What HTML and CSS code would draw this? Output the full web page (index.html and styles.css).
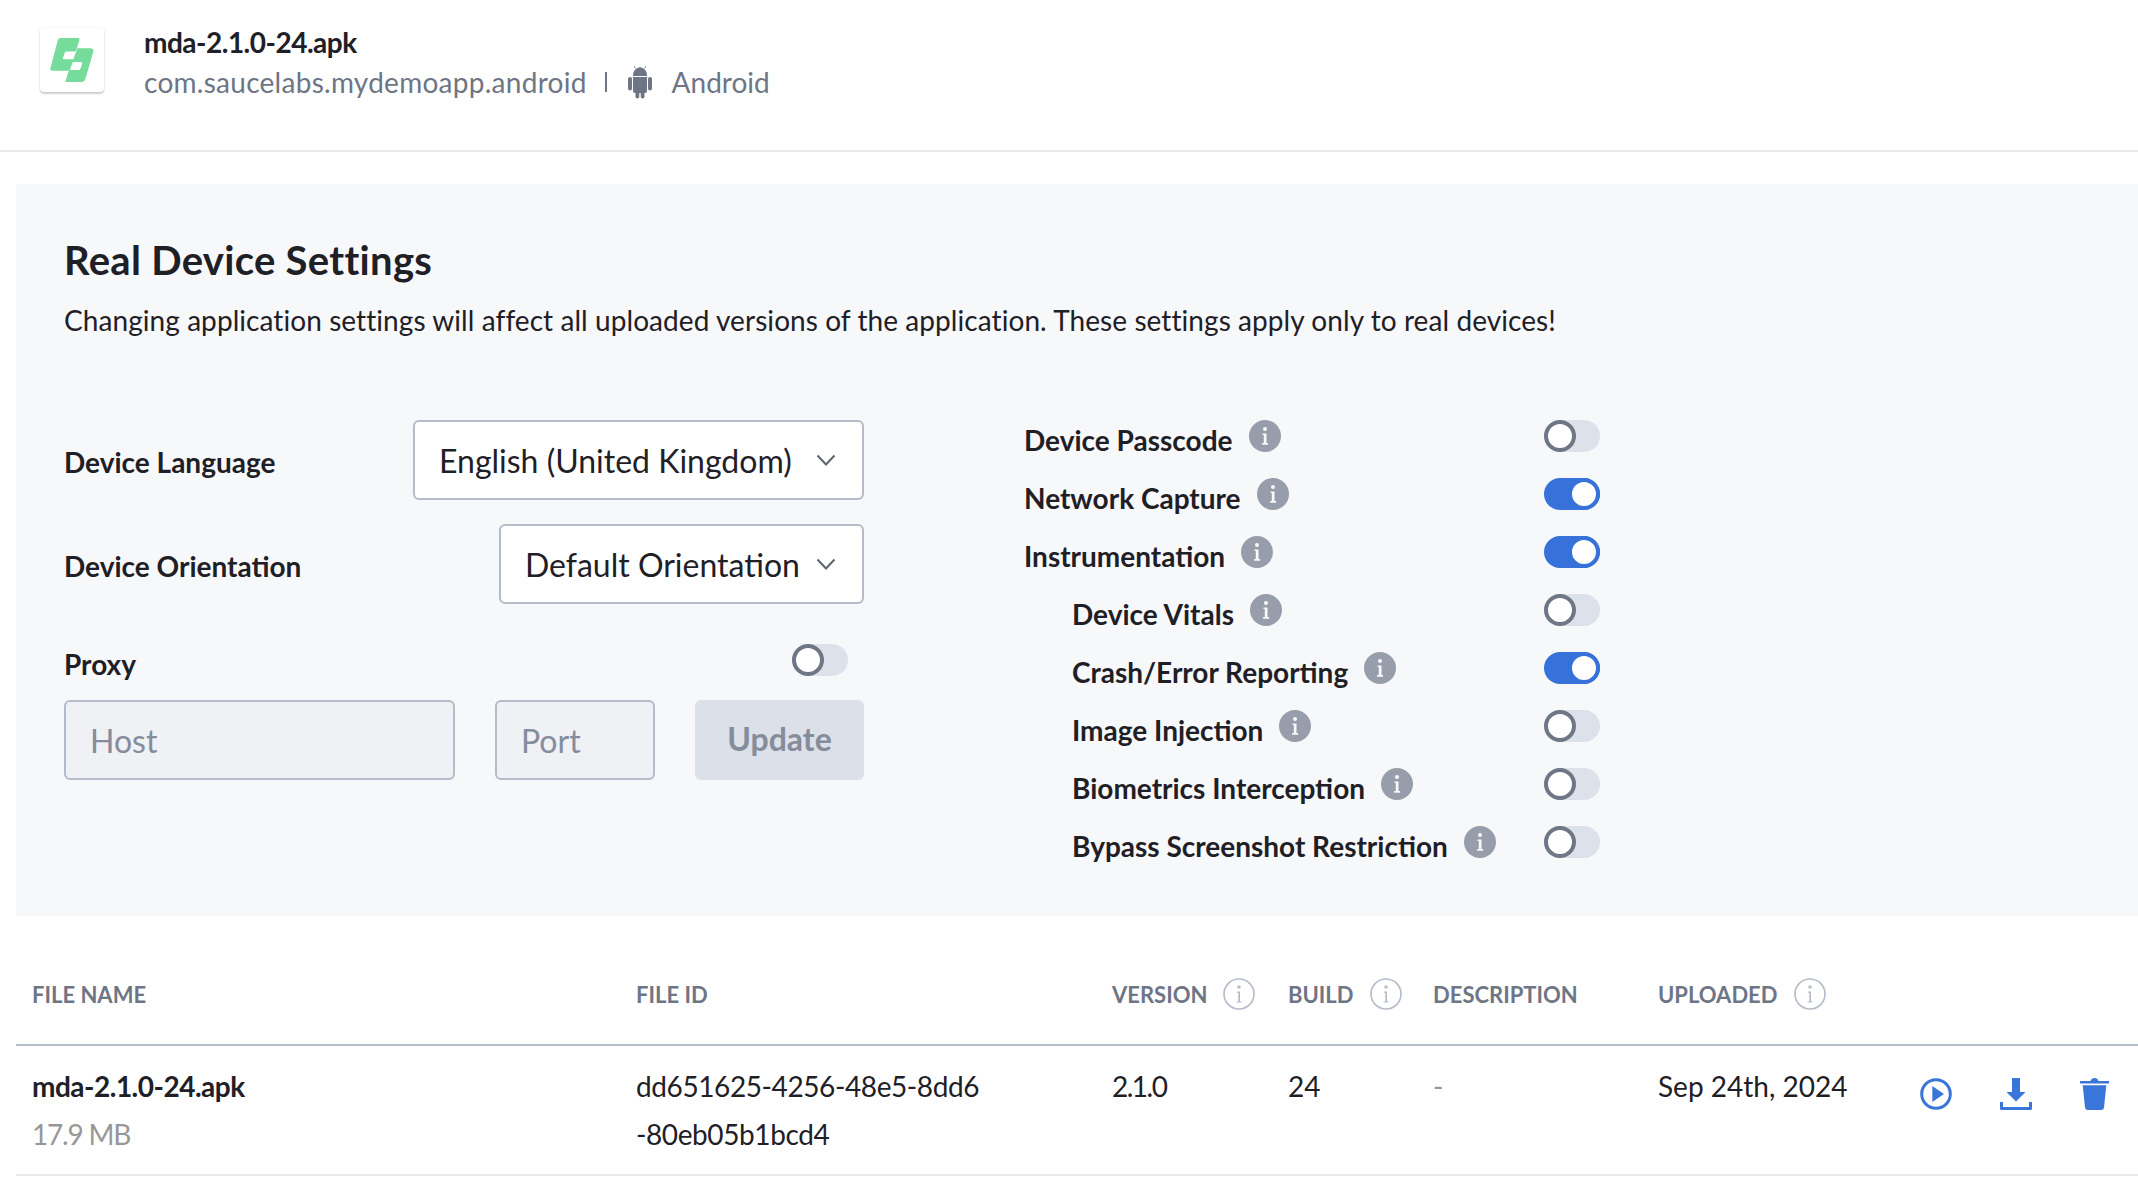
FILE: index.html
```html
<!DOCTYPE html>
<html lang="en">
<head>
  <meta charset="UTF-8" />
  <title>mda-2.1.0-24.apk</title>
  <link rel="stylesheet" href="styles.css">
</head>
<body>
  <svg class="icon-defs" xmlns="http://www.w3.org/2000/svg">
    <symbol id="info-solid" viewBox="0 0 32 32">
      <circle cx="16" cy="16" r="16" fill="#979daa"/>
      <circle cx="16" cy="9" r="2" fill="#f7f8fa"/>
      <path d="M13.5 13.5h4v9.6h1.6v1.6h-6v-1.6h1.700v-8h-1.300z" fill="#f7f8fa"/>
    </symbol>
    <symbol id="info-line" viewBox="0 0 32 32">
      <circle cx="16" cy="16" r="15" fill="none" stroke="#b4bcc9" stroke-width="1.6"/>
      <circle cx="16" cy="9" r="1.7" fill="#b4bcc9"/>
      <path d="M13.8 13.6h3.2v9.8h1.6v1.2h-5v-1.2h1.700v-8.600h-1.500z" fill="#b4bcc9"/>
    </symbol>
    <symbol id="chevron" viewBox="0 0 20 12">
      <path d="M1.5 1.5L10 10.5l8.500-9" fill="none" stroke="#5e6472" stroke-width="2"/>
    </symbol>
  </svg>

  <!-- App header -->
  <header class="app-header">
    <div class="app-logo">
      <svg width="64" height="64" viewBox="60 55 190 190" xmlns="http://www.w3.org/2000/svg">
        <path fill="#76dc9b" d="M122 85h50q7 0 5 7l-11 33h-28q-4 0-5 4l-5 15q-1 4 3 4h29l-10 29q-1 5-6 5H97q-8 0-6-8l21-80q2-9 10-9z"/>
        <path fill="#76dc9b" d="M171 115h38q12 0 9 11l-23 80q-2 9-11 9h-49l11-35h29q4 0 5-4l5-15q1-5-3-5h-26z"/>
      </svg>
    </div>
    <div class="app-info">
      <div class="app-name">mda-2.1.0-24.apk</div>
      <div class="app-meta">
        <span class="app-package">com.saucelabs.mydemoapp.android</span>
        <span class="meta-sep"></span>
        <svg width="28" height="34" viewBox="15 15 25 34" xmlns="http://www.w3.org/2000/svg">
          <g fill="#6e7585">
            <path d="M20.500 26q0-7.500 7-9 7 1.500 7 9z"/>
            <path d="M23 18.500L21.500 16M32 18.500l1.500-2.500" stroke="#6e7585" stroke-width=".8"/>
            <rect x="15.500" y="27" width="4" height="13.500" rx="2"/>
            <rect x="35.500" y="27" width="4" height="13.500" rx="2"/>
            <path d="M20.500 27h14v14q0 2-2 2h-10q-2 0-2-2z"/>
            <rect x="23" y="41" width="3.800" height="7.500" rx="1.900"/>
            <rect x="28.200" y="41" width="3.800" height="7.500" rx="1.900"/>
          </g>
        </svg>
        <span class="meta-os">Android</span>
      </div>
    </div>
  </header>

  <!-- Settings panel -->
  <section class="settings-panel">
    <h2>Real Device Settings</h2>
    <p class="settings-note">Changing application settings will affect all uploaded versions of the application. These settings apply only to real devices!</p>

    <div class="settings-body">
      <div class="settings-left">
        <div class="left-row">
          <span class="field-label">Device Language</span>
          <div class="select select-wide">
            <span>English (United Kingdom)</span>
            <svg class="chevron"><use href="#chevron"/></svg>
          </div>
        </div>
        <div class="left-row">
          <span class="field-label">Device Orientation</span>
          <div class="select select-narrow">
            <span>Default Orientation</span>
            <svg class="chevron"><use href="#chevron"/></svg>
          </div>
        </div>
        <div class="proxy-head">
          <span class="field-label">Proxy</span>
          <span class="toggle"></span>
        </div>
        <div class="proxy-fields">
          <div class="input input-host">Host</div>
          <div class="input input-port">Port</div>
          <div class="btn-update">Update</div>
        </div>
      </div>

      <div class="settings-right">
        <div class="opt-row"><span class="opt-label">Device Passcode</span><svg class="info"><use href="#info-solid"/></svg><span class="toggle"></span></div>
        <div class="opt-row"><span class="opt-label">Network Capture</span><svg class="info"><use href="#info-solid"/></svg><span class="toggle on"></span></div>
        <div class="opt-row"><span class="opt-label">Instrumentation</span><svg class="info"><use href="#info-solid"/></svg><span class="toggle on"></span></div>
        <div class="opt-row sub"><span class="opt-label">Device Vitals</span><svg class="info"><use href="#info-solid"/></svg><span class="toggle"></span></div>
        <div class="opt-row sub"><span class="opt-label">Crash/Error Reporting</span><svg class="info"><use href="#info-solid"/></svg><span class="toggle on"></span></div>
        <div class="opt-row sub"><span class="opt-label">Image Injection</span><svg class="info"><use href="#info-solid"/></svg><span class="toggle"></span></div>
        <div class="opt-row sub"><span class="opt-label">Biometrics Interception</span><svg class="info"><use href="#info-solid"/></svg><span class="toggle"></span></div>
        <div class="opt-row sub"><span class="opt-label">Bypass Screenshot Restriction</span><svg class="info"><use href="#info-solid"/></svg><span class="toggle"></span></div>
      </div>
    </div>
  </section>

  <!-- Files table -->
  <section class="files">
    <div class="files-row files-head">
      <div>FILE NAME</div>
      <div>FILE ID</div>
      <div class="head-cell">VERSION <svg class="info"><use href="#info-line"/></svg></div>
      <div class="head-cell">BUILD <svg class="info"><use href="#info-line"/></svg></div>
      <div>DESCRIPTION</div>
      <div class="head-cell">UPLOADED <svg class="info"><use href="#info-line"/></svg></div>
    </div>
    <div class="files-row files-item">
      <div>
        <div class="file-name">mda-2.1.0-24.apk</div>
        <div class="file-size">17.9 MB</div>
      </div>
      <div class="file-id">dd651625-4256-48e5-8dd6<br>-80eb05b1bcd4</div>
      <div class="file-version">2.1.0</div>
      <div>24</div>
      <div class="muted">-</div>
      <div>Sep 24th, 2024</div>
      <div class="file-actions">
        <svg width="32" height="32" viewBox="0 0 32 32" xmlns="http://www.w3.org/2000/svg">
          <circle cx="16" cy="16" r="14.300" fill="none" stroke="#3a75d9" stroke-width="3"/>
          <path d="M12.300 8l11.700 8-11.700 8z" fill="#3a75d9"/>
        </svg>
        <svg width="32" height="32" viewBox="0 0 32 32" xmlns="http://www.w3.org/2000/svg">
          <path d="M12 0h8v14h5.500L16 23.500 6.500 14H12z" fill="#3a75d9"/>
          <path d="M0 24h3v5h26v-5h3v6.500q0 1.500-1.500 1.500h-29Q0 32 0 30.500z" fill="#3a75d9"/>
        </svg>
        <svg width="29" height="32" viewBox="0 0 29 32" xmlns="http://www.w3.org/2000/svg">
          <path d="M0 3h10.500q1-3 4-3t4 3H29v2.500H0z" fill="#3a75d9"/>
          <path d="M2.700 7.300h23.600L24 29.500q-.3 2.500-3 2.500H8q-2.700 0-3-2.500z" fill="#3a75d9"/>
        </svg>
      </div>
    </div>
  </section>
</body>
</html>
```

FILE: styles.css
```css
/* Page */
body {
  margin: 0;
  background-color: #fff;
  color: #1f2026;
  font-family: Lato, "Liberation Sans", sans-serif;
  font-size: 28px;
  overflow: hidden;
}
.icon-defs {
  display: none;
}

/* App header */
.app-header {
  display: flex;
  height: 122px;
  padding: 28px 0 0 40px;
  border-bottom: 2px solid #e8e9ee;
}
.app-logo {
  width: 64px;
  height: 64px;
  display: flex;
  background-color: #fff;
  border-radius: 4px;
  box-shadow: 0 2px 2px rgba(31, 32, 38, 0.2), 0 0 2px rgba(31, 32, 38, 0.12);
}
.app-info {
  margin-left: 40px;
}
.app-name {
  font-weight: 700;
  line-height: 28px;
  letter-spacing: -0.5px;
}
.app-meta {
  display: flex;
  align-items: center;
  margin-top: 8px;
  color: #6e7585;
  height: 36px;
}
.app-package {
  letter-spacing: 0.27px;
}
.meta-sep {
  width: 2px;
  height: 20px;
  margin: 0 19px 0 18px;
  background-color: #6e7585;
}
.meta-os {
  margin-left: 18px;
}

/* Settings panel */
.settings-panel {
  margin: 32px 0 0 16px;
  height: 732px;
  box-sizing: border-box;
  padding: 54px 48px 0;
  background-color: #f7f8fa;
}
.settings-panel h2 {
  margin: 0;
  font-size: 40px;
  line-height: 44px;
  font-weight: 700;
  letter-spacing: 0.3px;
}
.settings-note {
  margin: 18px 0 0;
  line-height: 40px;
  letter-spacing: 0.07px;
}
.settings-body {
  display: flex;
  margin-top: 80px;
}
.settings-left {
  width: 800px;
}
.left-row {
  display: flex;
  justify-content: space-between;
  align-items: center;
  margin-bottom: 24px;
}
.field-label {
  font-weight: 700;
  margin-top: 4px;
}
.select {
  display: flex;
  align-items: center;
  justify-content: space-between;
  box-sizing: border-box;
  height: 80px;
  padding: 0 26px 0 24px;
  background-color: #fff;
  border: 2px solid #b4bcc9;
  border-radius: 6px;
  font-size: 32px;
}
.select-wide {
  width: 451px;
}
.select-narrow {
  width: 365px;
}
.chevron {
  width: 20px;
  height: 12px;
}
.proxy-head {
  display: flex;
  justify-content: space-between;
  align-items: center;
  height: 32px;
  margin: 40px 0 24px;
  padding-right: 16px;
}
.proxy-head .field-label {
  margin-top: 8px;
}
.proxy-fields {
  display: flex;
  gap: 40px;
  font-size: 32px;
}
.input {
  box-sizing: border-box;
  height: 80px;
  line-height: 78px;
  padding-left: 24px;
  background-color: #f0f1f5;
  border: 2px solid #b4bcc9;
  border-radius: 6px;
  color: #858c9b;
}
.input-host {
  width: 391px;
}
.input-port {
  width: 160px;
}
.btn-update {
  width: 169px;
  height: 80px;
  line-height: 78px;
  text-align: center;
  background-color: #dce0e8;
  border-radius: 6px;
  color: #858c9b;
  font-weight: 700;
}

/* Toggles */
.toggle {
  display: block;
  flex: none;
  width: 56px;
  height: 32px;
  border-radius: 16px;
  background-color: #dde1e9;
  position: relative;
}
.toggle::before {
  content: "";
  position: absolute;
  left: 0;
  top: 0;
  width: 32px;
  height: 32px;
  box-sizing: border-box;
  background-color: #fff;
  border: 4px solid #6f7685;
  border-radius: 50%;
}
.toggle.on {
  background-color: #3672da;
}
.toggle.on::before {
  left: 24px;
  border-color: #3672da;
}

/* Option list */
.settings-right {
  width: 576px;
  margin-left: 160px;
  display: flex;
  flex-direction: column;
  gap: 26px;
}
.opt-row {
  display: flex;
  align-items: center;
  height: 32px;
}
.opt-row.sub {
  padding-left: 48px;
}
.opt-label {
  font-weight: 700;
  margin-top: 8px;
}
.info {
  flex: none;
  width: 32px;
  height: 32px;
}
.opt-row .info {
  margin-left: 16px;
}
.opt-row .toggle {
  margin-left: auto;
}

/* Files table */
.files {
  margin-left: 16px;
}
.files-row {
  display: grid;
  grid-template-columns: 604px 476px 176px 145px 225px 262px auto;
  padding-left: 16px;
}
.files-head {
  height: 130px;
  box-sizing: border-box;
  align-items: center;
  padding-top: 28px;
  border-bottom: 2px solid #b4bcc9;
  color: #6e7585;
  font-size: 22px;
  font-weight: 700;
}
.head-cell {
  display: flex;
  align-items: center;
  gap: 16px;
}
.files-item {
  height: 130px;
  box-sizing: border-box;
  padding-top: 16px;
  line-height: 48px;
  border-bottom: 2px solid #e8e9ee;
}
.file-name {
  font-weight: 700;
  letter-spacing: -0.5px;
}
.file-size {
  letter-spacing: -1.2px;
}
.file-size,
.muted {
  color: #979797;
}
.file-id {
  letter-spacing: -0.4px;
}
.file-version {
  letter-spacing: -1.5px;
}
.file-actions {
  display: flex;
  gap: 48px;
  padding-top: 16px;
}
```
